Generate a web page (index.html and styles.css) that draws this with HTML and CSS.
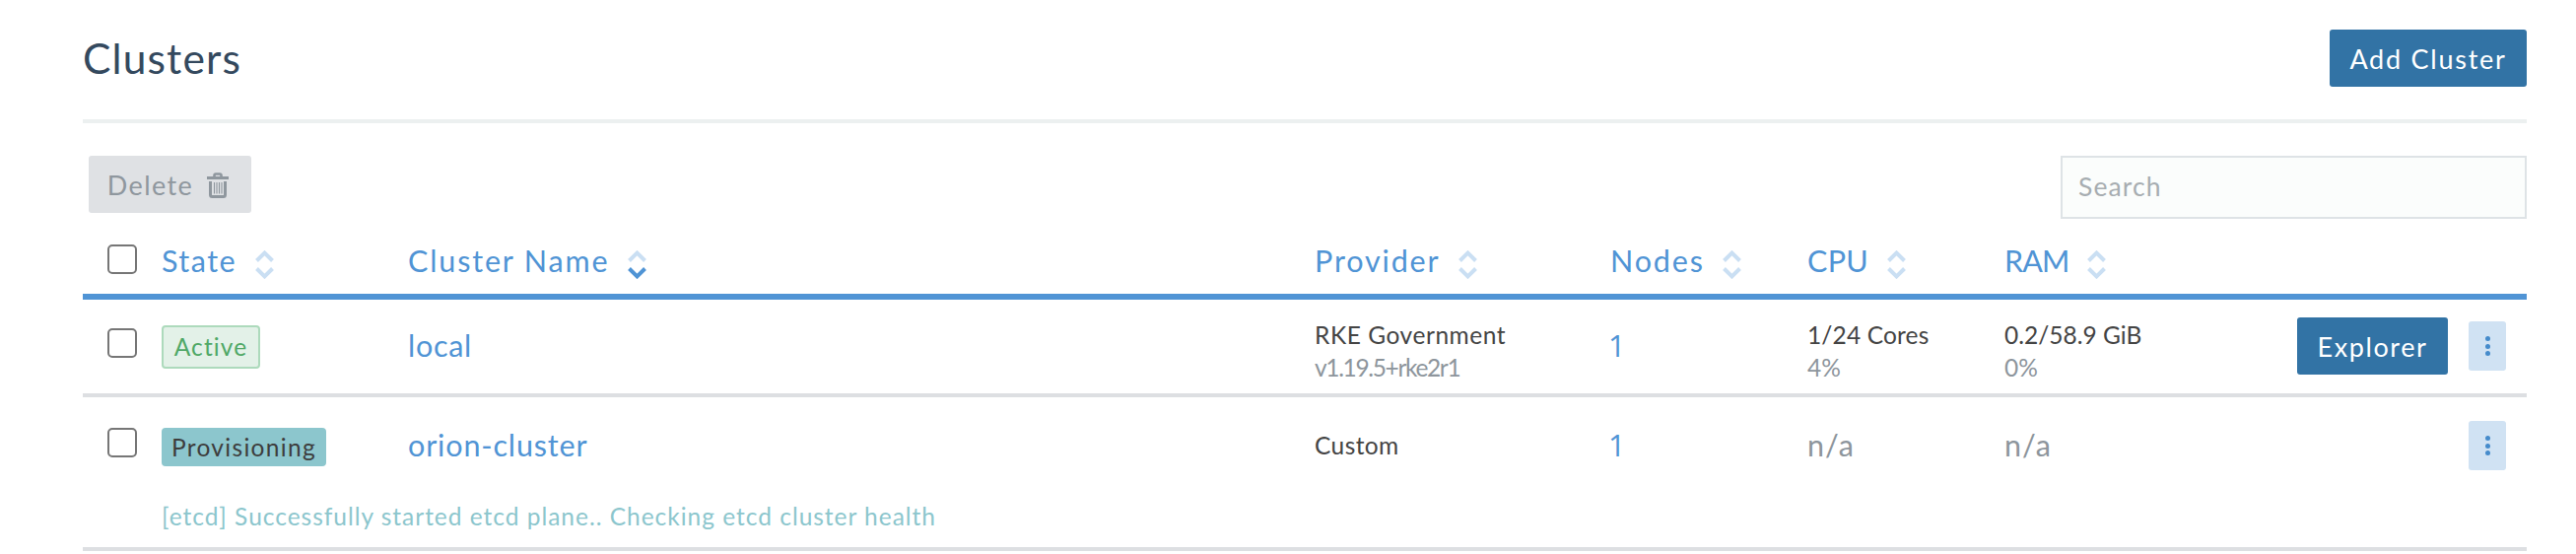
FILE: index.html
```html
<!DOCTYPE html>
<html lang="en">
<head>
<meta charset="utf-8">
<title>Clusters</title>
<link rel="stylesheet" href="styles.css">
</head>
<body>
<svg class="defs" aria-hidden="true">
  <symbol id="up" viewBox="0 0 19 12"><path d="M1.5 10.500 9.500 2.600l8 7.900" fill="none" stroke="currentColor" stroke-width="4"/></symbol>
  <symbol id="down" viewBox="0 0 19 12"><path d="M1.500 1.500 9.500 9.400l8-7.900" fill="none" stroke="currentColor" stroke-width="4"/></symbol>
</svg>
<main class="page">
  <header class="page-header">
    <h1 class="title">Clusters</h1>
    <button class="btn primary add">Add Cluster</button>
  </header>
  <div class="toolbar">
    <button class="btn delete">Delete
      <svg class="trash" viewBox="0 0 22 26"><path d="M7.500 5V3Q7.500 1.500 9 1.500h4Q14.500 1.500 14.500 3V5" fill="none" stroke="currentColor" stroke-width="2.600"/><path d="M0 4h22v3H0z" fill="currentColor"/><path d="M3.500 9v13.500q0 2 1.800 2h11.400q1.800 0 1.800-2V9" fill="none" stroke="currentColor" stroke-width="3"/><path d="M7.500 10v11.500M10 10v11.500M12.500 10v11.500M15 10v11.500" stroke="currentColor" stroke-width="1.100"/></svg>
    </button>
    <input class="search" placeholder="Search">
  </div>
  <section class="table">
    <div class="row head">
      <span class="check"></span>
      <span class="th state-th">State<span class="sort"><svg><use href="#up"/></svg><svg><use href="#down"/></svg></span></span>
      <span class="th">Cluster Name<span class="sort"><svg><use href="#up"/></svg><svg class="on"><use href="#down"/></svg></span></span>
      <span class="th">Provider<span class="sort"><svg><use href="#up"/></svg><svg><use href="#down"/></svg></span></span>
      <span class="th">Nodes<span class="sort"><svg><use href="#up"/></svg><svg><use href="#down"/></svg></span></span>
      <span class="th cpu-th">CPU<span class="sort"><svg><use href="#up"/></svg><svg><use href="#down"/></svg></span></span>
      <span class="th ram-th">RAM<span class="sort"><svg><use href="#up"/></svg><svg><use href="#down"/></svg></span></span>
    </div>
    <div class="row first">
      <span class="check"></span>
      <div><span class="badge active">Active</span></div>
      <a class="link local">local</a>
      <div class="stack"><div class="rke">RKE Government</div><div class="muted version">v1.19.5+rke2r1</div></div>
      <a class="link count">1</a>
      <div class="stack"><div class="cores">1/24 Cores</div><div class="muted">4%</div></div>
      <div class="stack"><div>0.2/58.9 GiB</div><div class="muted">0%</div></div>
      <div class="actions"><button class="btn primary explorer">Explorer</button><button class="more"><i></i><i></i><i></i></button></div>
    </div>
    <div class="row second">
      <span class="check"></span>
      <div><span class="badge provisioning">Provisioning</span></div>
      <a class="link orion">orion-cluster</a>
      <div class="custom">Custom</div>
      <a class="link count">1</a>
      <div class="na">n/a</div>
      <div class="na">n/a</div>
      <div class="actions"><button class="more"><i></i><i></i><i></i></button></div>
    </div>
    <div class="message">[etcd] Successfully started etcd plane.. Checking etcd cluster health</div>
  </section>
</main>
</body>
</html>
```

FILE: styles.css
```css
* { box-sizing: border-box; }
body { margin: 0; background: #fff; color: #444; font-family: Lato, sans-serif; font-size: 24.5px; line-height: 34px; white-space: nowrap; }
.defs { position: absolute; width: 0; height: 0; }
.page { padding: 0 50px 0 84px; }
.page-header { display: flex; justify-content: space-between; height: 125px; border-bottom: 4px solid #ecf0f0; padding-top: 30px; }
.title { margin: 0; font-weight: 400; font-size: 42.5px; line-height: 58px; letter-spacing: 1.150px; color: #34495e; }
.btn { display: flex; align-items: center; justify-content: center; height: 58px; border: 0; border-radius: 3px; padding: 1px 0 0; font: 27px/34px Lato, sans-serif; white-space: nowrap; }
.primary { background: #3273a5; color: #fff; }
.add { width: 200px; letter-spacing: 1.750px; }
.toolbar { display: flex; justify-content: space-between; padding: 33px 0 0 6px; height: 103px; }
.delete { width: 165px; padding-right: 4px; background: #dfe1e4; color: #8f979e; gap: 14px; letter-spacing: 1.400px; }
.trash { width: 22px; height: 26px; }
.search { width: 473px; height: 64px; border: 2px solid #dee3e6; border-radius: 0; background: #fbfdfc; padding: 0 16px 2px; font: 26.500px/34px Lato, sans-serif; letter-spacing: 1.100px; }
.search::placeholder { color: #a7adb1; opacity: 1; }
.row { display: grid; grid-template-columns: 80px 250px 920px 300px 200px 200px 200px 330px; }
.head { height: 76px; border-bottom: 6px solid #5094d5; color: #5094d5; font-size: 30.500px; padding-top: 17px; }
.check { width: 30px; height: 30px; border: 2px solid #767676; border-radius: 5px; margin-left: 25px; }
.head .check { margin-top: 3px; }
.th { display: flex; align-items: flex-start; line-height: 40px; gap: 18.500px; margin-top: -1px; letter-spacing: 1.850px; }
.state-th { letter-spacing: 1.500px; }
.cpu-th { letter-spacing: .3px; }
.ram-th { letter-spacing: -.85px; }
.sort { display: flex; flex-direction: column; gap: 5px; padding-top: 10px; color: #cadff3; }
.sort svg { width: 19px; height: 12px; }
.sort .on { color: #5094d5; }
.first { height: 99px; border-bottom: 4px solid #dddfe2; }
.first .check { margin-top: 29px; }
.badge { display: flex; align-items: center; justify-content: center; width: 100px; height: 44px; border-radius: 4px; margin-top: 26px; }
.active { background: #e3f1e8; border: 2px solid #addabc; color: #4fa866; letter-spacing: 1.1px; padding-bottom: 1px; }
.provisioning { width: 167px; height: 39px; background: #8cc6cd; color: #3d3d3d; margin-top: 31px; letter-spacing: 1.300px; }
.link { color: #5094d5; font-size: 30.500px; line-height: 40px; padding-top: 26px; }
.local { letter-spacing: .7px; }
.orion { letter-spacing: .85px; }
.count { font-family: "Open Sans", sans-serif; margin-left: -2px; }
.stack { padding-top: 19px; line-height: 33px; }
.rke { letter-spacing: .55px; }
.version { letter-spacing: -1.350px; }
.cores { letter-spacing: .15px; }
.muted, .na { color: #8d959c; }
.actions { display: flex; justify-content: flex-end; gap: 21px; padding-right: 21px; }
.explorer { width: 153px; margin-top: 18px; letter-spacing: 1.600px; }
.more { width: 38px; height: 50px; margin-top: 22px; border: 0; border-radius: 3px; padding: 0; background: #d0e2f3; display: flex; flex-direction: column; align-items: center; justify-content: center; gap: 2.300px; }
.more i { width: 5px; height: 5px; border-radius: 50%; background: #458bcb; }
.second { height: 99px; }
.second .check { margin-top: 31px; }
.second .more { margin-top: 24px; }
.custom { padding-top: 32px; letter-spacing: .4px; }
.na { font-size: 30.500px; padding-top: 31px; letter-spacing: 1.100px; }
.second .link { padding-top: 28px; }
.message { height: 57px; border-bottom: 4px solid #dddfe2; padding: 5px 0 0 80px; color: #8cc6cd; letter-spacing: .98px; }
```
